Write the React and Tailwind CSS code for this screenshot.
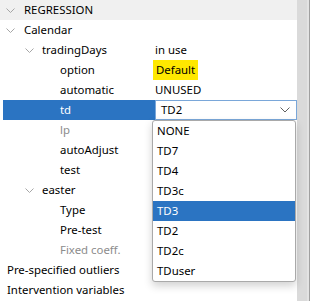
import { useState } from "react";

const rows = [
  { label: "REGRESSION", level: 0, open: true, header: true },
  { label: "Calendar", level: 0, open: true },
  { label: "tradingDays", level: 1, open: true, value: "in use" },
  { label: "option", level: 2, value: "Default", highlight: true },
  { label: "automatic", level: 2, value: "UNUSED" },
  { label: "td", level: 2, selected: true, combo: "TD2" },
  { label: "lp", level: 2, disabled: true },
  { label: "autoAdjust", level: 2 },
  { label: "test", level: 2 },
  { label: "easter", level: 1, open: true },
  { label: "Type", level: 2 },
  { label: "Pre-test", level: 2 },
  { label: "Fixed coeff.", level: 2, disabled: true },
  { label: "Pre-specified outliers", level: -1 },
  { label: "Intervention variables", level: -1 },
];

const options = ["NONE", "TD7", "TD4", "TD3c", "TD3", "TD2", "TD2c", "TDuser"];

function Chevron() {
  return (
    <svg width="9" height="5" viewBox="0 0 9 5">
      <path d="M0.5 0.5 L4.5 4.5 L8.5 0.5" fill="none" stroke="#a6a6a6" strokeWidth="1" />
    </svg>
  );
}

function Row({ row }) {
  const indent = row.level < 0 ? 7 : 24 + row.level * 18;
  return (
    <div className={`relative flex h-[20px] items-center ${row.header ? "bg-[#f0f0f0]" : ""}`}>
      {row.open && (
        <div className="absolute top-[8px]" style={{ left: row.level === 0 ? 6 : 25 }}>
          <Chevron />
        </div>
      )}
      <div
        className={`flex h-full w-[152px] shrink-0 items-center ${row.selected ? "ml-[3px] bg-[#2b74c2] text-white" : ""}`}
        style={{ paddingLeft: row.selected ? indent - 3 : indent }}
      >
        <span className={row.disabled ? "text-[#8c8c8c]" : ""}>{row.label}</span>
      </div>
      {row.value && !row.highlight && <span className="pl-[3px]">{row.value}</span>}
      {row.highlight && (
        <span className="ml-[1px] flex h-[20px] items-center bg-[#ffe800] px-[3px]">{row.value}</span>
      )}
      {row.combo && (
        <div className="flex h-[20px] flex-1 items-center justify-between border border-[#7aa7d9] bg-white pl-[5px] pr-[6px]">
          <span>{row.combo}</span>
          <svg width="10" height="6" viewBox="0 0 10 6">
            <path d="M0.5 0.5 L5 5 L9.5 0.5" fill="none" stroke="#606060" strokeWidth="1" />
          </svg>
        </div>
      )}
    </div>
  );
}

export default function App() {
  const [picked] = useState("TD3");
  return (
    <div
      className="relative flex h-[301px] w-[311px] overflow-hidden bg-white text-[11.4px] text-black"
      style={{ fontFamily: "'Noto Sans', 'Open Sans', sans-serif" }}
    >
      <div className="w-[297px] shrink-0">
        {rows.map((row) => (
          <Row key={row.label} row={row} />
        ))}
      </div>
      <div className="w-[10px] shrink-0 bg-[#dadada]" />
      <div className="w-[2px] shrink-0 bg-[#e3e3e3]" />
      <div className="w-[1px] shrink-0 bg-[#a0a0a0]" />
      <div className="flex-1 bg-white" />

      <div className="absolute left-[152px] top-[120px] w-[144px] rounded-[3px] border border-[#a9a9a9] bg-white shadow-[0_4px_8px_rgba(0,0,0,0.18)]">
        {options.map((o) => (
          <div
            key={o}
            className={`flex h-[20px] items-center pl-[4px] ${o === picked ? "bg-[#2b74c2] text-white" : ""}`}
          >
            {o}
          </div>
        ))}
      </div>
    </div>
  );
}
